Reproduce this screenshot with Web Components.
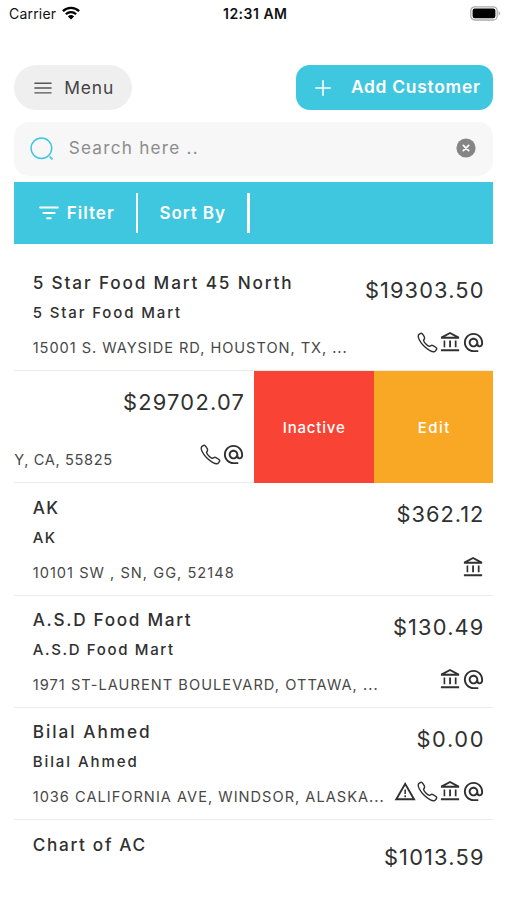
<!DOCTYPE html>
<html lang="en">
<head>
<meta charset="utf-8">
<title>Customers</title>
<style>
html,body{margin:0;height:100%;overflow:hidden;background:#fff}
body{font-family:Inter,"Liberation Sans",sans-serif;color:#303030}
</style>
</head>
<body>
<customer-screen></customer-screen>
<script>
const define = (name, css, html, setup) => customElements.define(name, class extends HTMLElement {
  connectedCallback() {
    if (this.shadowRoot) return;
    this.attachShadow({mode: 'open'}).innerHTML = `<style>${css}</style>${typeof html === 'function' ? html(this) : html}`;
    if (setup) setup(this);
  }
});

// A single line of tracked text; "w" is the measure that the tracking fills.
define('track-text',
  ':host{display:block;white-space:nowrap;flex:none;width:max-content}',
  '<slot></slot>',
  el => {
    el.style.fontSize = el.getAttribute('size') + 'px';
    el.style.fontWeight = el.getAttribute('weight') || 400;
    const w = parseFloat(el.getAttribute('w'));
    const n = el.textContent.length;
    const natural = el.getBoundingClientRect().width;
    const ls = (w - natural) / (n - 1);
    el.style.letterSpacing = ls + 'px';
    el.style.marginRight = -ls + 'px';
  });

const ICONS = {
  wifi: ['0 0 18 14', '<g fill="none" stroke="#000" stroke-width="2.3"><path d="M.9 5.1a11.6 11.6 0 0 1 16.2 0"/><path d="M3.9 8.3a7.3 7.3 0 0 1 10.2 0"/></g><path d="M9 13.6 5.9 10.4a4.5 4.5 0 0 1 6.2 0z"/>'],
  battery: ['0 0 31 15', '<rect x=".8" y=".8" width="26.4" height="13.2" rx="4" fill="#fff" stroke="#aaa" stroke-width="1.3"/><rect x="2.6" y="2.6" width="22.8" height="9.6" rx="2.2"/><path d="M28.6 5.2c1.9.6 1.9 3.8 0 4.4z" fill="#aaa"/>'],
  menu: ['0 0 18 12', '<path d="M.9 1.2h16.2M.9 6h16.2M.9 10.8h16.2" stroke="#555" stroke-width="1.35" stroke-linecap="round"/>'],
  plus: ['0 0 16 16', '<path d="M8 .8v14.4M.8 8h14.4" stroke="#fff" stroke-width="1.6" stroke-linecap="round"/>'],
  search: ['0 0 24 24', '<circle cx="11.4" cy="11.3" r="10.3" fill="none" stroke="#3fc7e0" stroke-width="1.5"/><path d="m19.6 19.6 2.9 2.7" stroke="#3fc7e0" stroke-width="1.7"/>'],
  clear: ['0 0 20 20', '<circle cx="10" cy="10" r="9.6" fill="#858585"/><path d="m7.3 7.3 5.4 5.4m0-5.4-5.4 5.4" stroke="#fff" stroke-width="1.7" stroke-linecap="round"/>'],
  filter: ['0 0 20 14', '<path d="M1.2 1.6h17.6M4.4 7h11.2M8.1 12.3h3.6" stroke="#fff" stroke-width="2" stroke-linecap="round"/>'],
  phone: ['0 0 512 512', '<path fill="none" stroke="#303030" stroke-width="32" stroke-miterlimit="10" d="M451 374c-15.88-16-54.34-39.35-73-48.76-24.3-12.24-26.3-13.24-45.4.95-12.74 9.47-21.21 17.93-36.12 14.75s-47.31-21.11-75.68-49.39-47.34-61.62-50.53-76.48 5.41-23.23 14.79-36c13.22-18 12.22-21 .92-45.3-8.81-18.9-32.84-57-48.9-72.8C119.9 44 119.9 47 108.83 51.6A160.15 160.15 0 0 0 83 65.37C67 76 58.12 84.83 51.91 98.1s-9 44.38 23.07 102.64 54.57 88.05 101.14 134.49S258.5 406.64 310.85 436c64.76 36.27 89.6 29.2 102.91 23s22.18-15 32.83-31a159.09 159.09 0 0 0 13.8-25.8C465 391.17 468 391.17 451 374z"/>'],
  bank: ['0 0 24 24', '<path fill="#303030" d="M6.5 10H4.8v7h1.7zm6 0h-1.9v7h1.9zM21 19H2v2h19zm-2.7-9h-1.8v7h1.8zm-6.8-6.74L16.71 6H6.29zm0-2.26L2 6v2h19V6z"/>'],
  at: ['0 0 24 24', '<path fill="#303030" d="M12 2C6.48 2 2 6.48 2 12s4.48 10 10 10h5v-2h-5c-4.34 0-8-3.66-8-8s3.66-8 8-8 8 3.66 8 8v1.43c0 .79-.71 1.57-1.5 1.57s-1.5-.78-1.5-1.57V12c0-2.76-2.24-5-5-5s-5 2.24-5 5 2.24 5 5 5c1.38 0 2.64-.56 3.54-1.47.65.89 1.77 1.47 2.96 1.47 1.97 0 3.5-1.6 3.5-3.57V12c0-5.52-4.48-10-10-10zm0 13c-1.66 0-3-1.34-3-3s1.34-3 3-3 3 1.34 3 3-1.34 3-3 3z"/>'],
  warn: ['0 0 24 24', '<path fill="#303030" d="M12.7 5.99 20.23 19H5.17zM12.7 2 1.7 21h22zm.8 14h-1.6v2h1.6zm0-6h-1.6v4.6h1.6z"/>']
};
define('ui-icon', ':host{display:block;flex:none}svg{display:block}', el => {
  const [box, art] = ICONS[el.getAttribute('name')];
  const w = el.getAttribute('width') || 23, h = el.getAttribute('height') || w;
  return `<svg width="${w}" height="${h}" viewBox="${box}">${art}</svg>`;
});

define('status-bar', `
  :host{display:grid;grid-template-columns:1fr auto 1fr;align-items:center;height:27px;padding:0 6px 0 9px;color:#111;box-sizing:border-box}
  div{display:flex;align-items:center;gap:6px}
  div:last-child{justify-content:flex-end}
  ui-icon{margin-bottom:1px}`, `
  <div><track-text size="14" w="47">Carrier</track-text><ui-icon name="wifi" width="18" height="14"></ui-icon></div>
  <track-text size="14" weight="600" w="64">12:31 AM</track-text>
  <div><ui-icon name="battery" width="31" height="15"></ui-icon></div>`);

define('pill-button', `
  :host{display:flex;align-items:center;height:45px;box-sizing:border-box;background:#efefef;border-radius:23px;color:#444;width:118px;padding-left:19.5px;gap:12.5px}
  :host([primary]){background:#3fc7e0;border-radius:14px;color:#fff;width:197px;padding-left:19px;gap:19.5px}
  :host([primary]) ::slotted(track-text){padding-bottom:1.5px}`,
  '<slot></slot>');

define('search-field', `
  :host{display:flex;align-items:center;height:54px;box-sizing:border-box;background:#f7f7f7;border-radius:15px;padding:0 17.5px 0 15.5px;color:#8d8d8d}
  track-text{margin-left:15px;padding-bottom:2px}
  .end{margin-left:auto;margin-bottom:1px}`, `
  <ui-icon name="search" width="24"></ui-icon>
  <track-text size="17.2" w="129">Search here ..</track-text>
  <ui-icon class="end" name="clear" width="20"></ui-icon>`);

define('filter-bar', `
  :host{display:flex;align-items:center;height:62px;box-sizing:border-box;background:#3fc7e0;color:#fff;padding-left:25px}
  .item{display:flex;align-items:center;gap:7.5px}
  .item track-text{padding-bottom:1px}
  i{width:2.6px;height:40px;background:#fff;flex:none}
  .a{width:96.7px}.b{width:88.4px;padding-left:21px;box-sizing:border-box;width:108.6px}`, `
  <div class="item a"><ui-icon name="filter" width="20" height="14"></ui-icon><track-text size="17" weight="600" w="47">Filter</track-text></div><i></i>
  <div class="item b"><track-text size="17" weight="600" w="65.5">Sort By</track-text></div><i></i>`);

define('customer-row', `
  :host{display:flex;justify-content:space-between;height:112.35px;box-sizing:border-box;border-bottom:1.5px solid #ebebeb;overflow:hidden}
  .l{padding:14.4px 0 0 18.5px;line-height:20px}
  .sub{margin-top:10px;height:20px}
  .addr{margin-top:15.2px;color:#484848}
  .r{display:flex;flex-direction:column;align-items:flex-end;padding-right:8.5px;padding-top:16.2px;line-height:30px}
  .amt{padding-right:1.5px}
  .icons{display:flex;margin-top:26.3px}
  :host([low]) .r{padding-top:21.5px}
  :host([swiped]){border-bottom:0}
  :host([swiped]) .l{padding-left:0}
  .view{display:flex;justify-content:space-between;flex:1;min-width:0;overflow:hidden}
  :host([swiped]) .view{border-bottom:1.5px solid #ebebeb}`, `
  <div class="view"><div class="l"><slot name="name"><div style="height:20px"></div></slot><div class="sub"><slot name="sub"></slot></div><div class="addr"><slot name="address"></slot></div></div>
  <div class="r"><div class="amt"><slot name="amount"></slot></div><div class="icons"><slot name="icons"></slot></div></div></div>
  <slot name="actions"></slot>`);

define('swipe-action', `
  :host{display:flex;align-items:center;justify-content:center;width:119.75px;height:112.35px;flex:none;color:#fff;background:#f84335}
  :host([edit]){background:#f9a825}`, '<slot></slot>');

const CUSTOMERS = [
  {n: ['5 Star Food Mart 45 North', 259], s: ['5 Star Food Mart', 147.5], a: ['15001 S. WAYSIDE RD, HOUSTON, TX, ...', 314], t: ['$19303.50', 118.5], i: 'phone bank at'},
  {a: ['Y, CA, 55825', 98], t: ['$29702.07', 121], i: 'phone at', swiped: true},
  {n: ['AK', 25.5], s: ['AK', 22.5], a: ['10101 SW , SN, GG, 52148', 201], t: ['$362.12', 87], i: 'bank'},
  {n: ['A.S.D Food Mart', 158], s: ['A.S.D Food Mart', 140.5], a: ['1971 ST-LAURENT BOULEVARD, OTTAWA, ...', 345], t: ['$130.49', 90.5], i: 'bank at'},
  {n: ['Bilal Ahmed', 117], s: ['Bilal Ahmed', 104], a: ['1036 CALIFORNIA AVE, WINDSOR, ALASKA...', 351], t: ['$0.00', 67], i: 'warn phone bank at'},
  {n: ['Chart of AC', 112.5], t: ['$1013.59', 99.5], i: '', low: true}
];
const line = (slot, v, size, weight) => v ? `<track-text slot="${slot}" size="${size}" weight="${weight}" w="${v[1]}">${v[0]}</track-text>` : '';
define('customer-list', ':host{display:block}', CUSTOMERS.map(c => `
  <customer-row${c.swiped ? ' swiped' : ''}${c.low ? ' low' : ''}>
    ${line('name', c.n, 17.2, 500)}${line('sub', c.s, 15, 500)}${line('address', c.a, 14.6, 400)}${line('amount', c.t, 21.8, 400)}
    ${c.i.split(' ').filter(Boolean).map(k => `<ui-icon slot="icons" name="${k}"></ui-icon>`).join('')}
    ${c.swiped ? `<swipe-action slot="actions"><track-text size="15" weight="500" w="62">Inactive</track-text></swipe-action>
    <swipe-action slot="actions" edit><track-text size="15" weight="500" w="31.5">Edit</track-text></swipe-action>` : ''}
  </customer-row>`).join(''));

define('customer-screen', `
  :host{display:block;width:507px;height:900px;overflow:hidden}
  main{padding:38px 13.6px 0 14.2px}
  .top{display:flex;justify-content:space-between}
  search-field{margin-top:11.5px}
  filter-bar{margin-top:6.5px}
  customer-list{margin-top:14.5px}`, `
  <status-bar></status-bar>
  <main>
    <div class="top">
      <pill-button><ui-icon name="menu" width="18" height="12"></ui-icon><track-text size="17.4" w="49">Menu</track-text></pill-button>
      <pill-button primary><ui-icon name="plus" width="16"></ui-icon><track-text size="17.4" weight="600" w="129">Add Customer</track-text></pill-button>
    </div>
    <search-field></search-field>
    <filter-bar></filter-bar>
    <customer-list></customer-list>
  </main>`);
</script>
</body>
</html>
